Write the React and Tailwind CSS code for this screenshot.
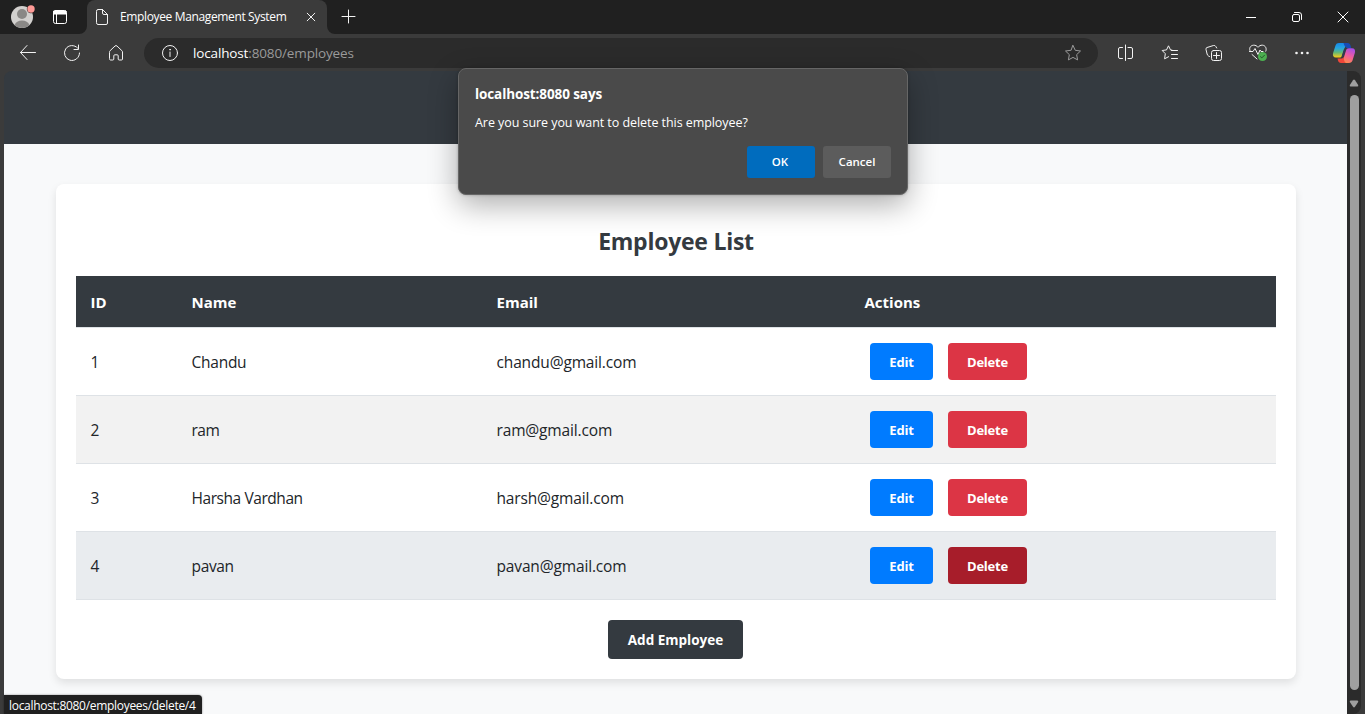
import React from 'react';

const employees = [
  { id: 1, name: 'Chandu', email: 'chandu@gmail.com', row: 'bg-white', del: 'bg-[#dc3545]', fit: 'tracking-[-0.250px]' },
  { id: 2, name: 'ram', email: 'ram@gmail.com', row: 'bg-[#f2f2f2]', del: 'bg-[#dc3545]', fit: 'tracking-[-0.500px]' },
  { id: 3, name: 'Harsha Vardhan', email: 'harsh@gmail.com', row: 'bg-white', del: 'bg-[#dc3545]', fit: 'tracking-[-0.430px]' },
  { id: 4, name: 'pavan', email: 'pavan@gmail.com', row: 'bg-[#e9ecef]', del: 'bg-[#a71d2a]', fit: 'tracking-[-0.350px]' },
];

function Icon({ size = 18, className = '', children, stroke = '#f2f2f2', width = 1 }) {
  return (
    <svg
      width={size}
      height={size}
      viewBox={`0 0 ${size} ${size}`}
      fill="none"
      stroke={stroke}
      strokeWidth={width}
      strokeLinecap="round"
      strokeLinejoin="round"
      className={`block shrink-0 ${className}`}
    >
      {children}
    </svg>
  );
}

function TabStrip() {
  return (
    <div className="flex h-[34px] shrink-0 bg-[#202020]">
      <svg width="24" height="24" viewBox="0 0 24 24" className="mt-[5px] ml-[11px] block shrink-0">
        <circle cx="11" cy="12" r="11" fill="#d2d0ce" />
        <circle cx="11" cy="9" r="5" fill="#8a8886" />
        <path d="M3.600 20.200C4.500 17.200 7.500 15.600 11 15.600s6.500 1.600 7.400 4.600A11 11 0 0 1 3.600 20.200Z" fill="#8a8886" />
        <circle cx="20" cy="4" r="4.200" fill="#202020" />
        <circle cx="20" cy="4" r="3.700" fill="#ff9a96" />
      </svg>
      <Icon size={16} className="mt-[9px] ml-[17px]" stroke="#ffffff">
        <rect x="1.500" y="1.500" width="13" height="13" rx="2" />
        <path d="M2 2h12v3H2z" fill="#fff" />
        <path d="M4.500 5v9" />
      </Icon>
      <div className="relative ml-[19px] flex h-full w-60 rounded-t-lg bg-[#3b3b3b]">
        <svg width="8" height="8" viewBox="0 0 8 8" className="absolute bottom-0 -left-2">
          <path d="M8 0v8H0a8 8 0 0 0 8-8Z" fill="#3b3b3b" />
        </svg>
        <svg width="8" height="8" viewBox="0 0 8 8" className="absolute -right-2 bottom-0">
          <path d="M0 0v8h8a8 8 0 0 1-8-8Z" fill="#3b3b3b" />
        </svg>
        <Icon size={16} className="mt-[9px] ml-[7px]">
          <path d="M2.500 2q0-1.500 1.500-1.500h4.500L13.500 5.500V14q0 1.500-1.500 1.500H4q-1.500 0-1.500-1.500ZM8.500 .5V4q0 1.500 1.500 1.500h3.500" />
        </Icon>
        <span className="mt-[9px] ml-[10px] w-[168px] text-[12px] leading-4 tracking-[-0.360px] whitespace-nowrap text-white">
          Employee Management System
        </span>
        <Icon size={10} className="mt-3 ml-[18px]">
          <path d="M1.200 1.200l7.600 7.600M8.800 1.200L1.200 8.800" />
        </Icon>
      </div>
      <Icon size={15} className="mt-[9px] ml-[14px]">
        <path d="M7.500 1v13M1 7.500h13" />
      </Icon>
      <div className="ml-auto flex items-center pr-[16px]">
        <Icon size={12} stroke="#fff">
          <path d="M1 6.500h10" strokeLinecap="butt" />
        </Icon>
        <Icon size={12} className="ml-[34px]" stroke="#fff">
          <rect x="1.500" y="3.500" width="7" height="7" rx="1.500" />
          <path d="M3.500 1.500H8q2.500 0 2.500 2.500v4.500" />
        </Icon>
        <Icon size={12} className="ml-[34px]" stroke="#fff">
          <path d="M1 1l10 10M11 1L1 11" />
        </Icon>
      </div>
    </div>
  );
}

function Copilot() {
  return (
    <svg width="24" height="22" viewBox="0 0 24 22" className="block shrink-0">
      <defs>
        <linearGradient id="cool" x1="0" y1="0" x2="0" y2="1">
          <stop offset="0" stopColor="#1688e8" />
          <stop offset=".35" stopColor="#25a5e0" />
          <stop offset=".65" stopColor="#62b878" />
          <stop offset="1" stopColor="#ffce14" />
        </linearGradient>
        <linearGradient id="warm" x1=".7" y1="0" x2=".3" y2="1">
          <stop offset="0" stopColor="#a64de8" />
          <stop offset=".5" stopColor="#ef5d9f" />
          <stop offset="1" stopColor="#ff8a45" />
        </linearGradient>
      </defs>
      <path d="M7 1h8.500L12 7l-2.500 7.500q-.4 1-1.500 1H4C1.500 15.500.4 13.800 1.100 11L3.500 3.500C4.100 1.800 5.200 1 7 1Z" fill="url(#cool)" />
      <path d="M11.500 1h4c2 0 2.500 1 3 2.500l.8 2.700h-3.500c-2.200 0-3.300-2-4.300-5.200Z" fill="#174bb5" />
      <path d="M17 21H9.500l2.500-6 2-6.500c.5-1.600 1.300-2.300 3-2.300h3c2.500 0 3.600 2 2.900 4.500L20.500 18.500c-.5 1.500-1.700 2.500-3.500 2.500Z" fill="url(#warm)" />
      <path d="M5.500 16.500H9c1.300 0 2-.5 2.500-1.500.4 3 1 5.500 2.500 6H9c-1.700 0-2.600-1-3-2.500Z" fill="#f0473a" />
      <path d="M13 7.500l-2.400 7" stroke="#303a58" strokeWidth="1.500" />
    </svg>
  );
}

const STAR = 'M9 1.500l2.250 4.800 5.250.7-3.850 3.650.95 5.250L9 13.400 4.400 15.900l.95-5.250L1.500 7l5.250-.7Z';

function Toolbar() {
  return (
    <div className="flex h-[37px] shrink-0 items-center bg-[#3b3b3b] pl-[19px]">
      <Icon>
        <path d="M16.500 8.500h-15M8 1.500L1.500 8.500 8 15.500" />
      </Icon>
      <Icon className="ml-[26px]">
        <path d="M14.600 4A7.500 7.500 0 1 0 16.500 9M15.500 1v4.500H11" />
      </Icon>
      <Icon className="ml-[26px]">
        <path d="M2.500 8q0-.8.600-1.300L8 2q1-.9 2 0l4.900 4.700q.6.500.6 1.300v7q0 1-1 1h-2.300q-1 0-1-1v-3.200q0-1-1-1H7.800q-1 0-1 1V15q0 1-1 1H3.500q-1 0-1-1Z" />
      </Icon>
      <div className="mt-px ml-[19px] flex h-[30px] w-[954px] items-center rounded-full bg-[#2b2b2b] pr-[16px] pl-[17px]">
        <Icon>
          <circle cx="9" cy="9" r="7.500" />
          <path d="M9 8v4.500" />
          <circle cx="9" cy="5.700" r=".4" />
        </Icon>
        <span className="ml-[14px] text-[13.500px] leading-5 tracking-[-0.140px] text-[#9a9a9a]">
          <span className="text-white">localhost</span>:8080/employees
        </span>
        <Icon className="ml-auto" stroke="#9a9a9a">
          <path d={STAR} />
        </Icon>
      </div>
      <Icon className="ml-[19px]">
        <path d="M5.500 3.500H3q-1.500 0-1.500 1.500v8q0 1.500 1.500 1.500h2.500M11 3.500h3q1.500 0 1.500 1.500v8q0 1.500-1.500 1.500h-3M8.500 1v15.500" />
      </Icon>
      <Icon className="ml-[26px]">
        <path d="M11 6.100L9.500 5.900 7.500 1.800 5.500 5.900l-4.300.6 3.100 3.200-.7 5.100 4-2.100M10.500 6.500h6M10.500 10.500h6M10.500 14.500h6" />
      </Icon>
      <Icon className="ml-[26px]">
        <rect x="6.500" y="6.500" width="10" height="10" rx="2" />
        <path d="M11.500 8.500v6M8.500 11.500h6M4.500 12.500L3.500 12q-1-.5-1.400-2L1 5.500Q.600 4 2 3.500L8.500 1.500q1.500-.5 2.300 1l.9 1.500" />
      </Icon>
      <Icon size={20} className="ml-[25px]">
        <path d="M2.500 8.500C.500 6 2 2.500 5.500 2.200 7.500 2 9 3 10 4.300 11 3 12.500 2 14.500 2.200c3 .3 4.500 3.300 3.300 6M1.500 8.500h3.500l2-3 3 6 2-4.500 1 1.500h2M4 11.500l5 4.500" />
        <circle cx="14.500" cy="13.500" r="4.500" fill="#4caf50" stroke="none" />
        <path d="M12.500 13.700l1.300 1.200 2.700-2.700" stroke="#24552a" />
      </Icon>
      <Icon className="ml-[25px]">
        <g fill="#f2f2f2" stroke="none">
          <circle cx="3.500" cy="9" r="1.300" />
          <circle cx="9" cy="9" r="1.300" />
          <circle cx="14.500" cy="9" r="1.300" />
        </g>
      </Icon>
      <div className="ml-[21px]">
        <Copilot />
      </div>
    </div>
  );
}

function Scrollbar() {
  return (
    <div className="flex w-[14px] shrink-0 flex-col items-center rounded-r-lg bg-[#2b2b2b]">
      <svg width="10" height="8" viewBox="0 0 10 8" className="mt-2 block shrink-0">
        <path d="M4 1.200Q5 0 6 1.200L9.200 6Q9.600 7.500 8.400 7.500H1.600Q.4 7.500.8 6Z" fill="#9f9f9f" />
      </svg>
      <div className="mt-2 h-[595px] w-[9px] shrink-0 rounded-full bg-[#9f9f9f]" />
      <svg width="10" height="8" viewBox="0 0 10 8" className="mt-[10px] block shrink-0">
        <path d="M4 6.800Q5 8 6 6.800L9.200 2Q9.600.5 8.400.5H1.600Q.4.500.8 2Z" fill="#9f9f9f" />
      </svg>
    </div>
  );
}

const COLS = 'grid grid-cols-[101px_306px_367px_1fr] items-center pl-[14.5px]';

function EmployeePage() {
  return (
    <div className="flex min-w-0 flex-1 flex-col">
      <div className="h-[73px] shrink-0 rounded-tl-lg bg-[#343a40]" />
      <div className="flex-1 bg-[#f8f9fa] pt-10 pl-[52px]">
        <main className="flex h-[495px] w-[1240px] flex-col items-center rounded-lg bg-white px-5 shadow-[0_4px_8px_rgba(0,0,0,0.1)]">
          <h2 className="mt-10 h-[52px] text-[23px] leading-[34px] font-bold tracking-[-0.250px] text-[#343a40]">
            Employee List
          </h2>
          <div className="w-full text-[15.500px] text-[#212529]">
            <div className={`${COLS} h-[52px] border-b border-[#dee2e6] bg-[#343a40] pt-0.5 text-[15px] font-bold text-white`}>
              <span>ID</span>
              <span>Name</span>
              <span className="-ml-px">Email</span>
              <span>Actions</span>
            </div>
            {employees.map((e) => (
              <div key={e.id} className={`${COLS} h-[68px] border-b border-[#dee2e6] ${e.row}`}>
                <span className="pt-0.5">{e.id}</span>
                <span className={`pt-0.5 ${e.fit}`}>{e.name}</span>
                <span className="-ml-px pt-0.5 tracking-[-0.150px]">{e.email}</span>
                <div className="ml-[5.5px] flex gap-[15px] text-[13px] font-bold tracking-[-0.200px] text-white">
                  <button className="h-[37px] w-[63px] rounded bg-[#007bff] pt-0.5">Edit</button>
                  <button className={`h-[37px] w-[79px] rounded pt-0.5 ${e.del}`}>Delete</button>
                </div>
              </div>
            ))}
          </div>
          <button className="mt-5 mr-px h-[39px] w-[135px] shrink-0 rounded bg-[#343a40] pt-0.5 text-[13.500px] font-bold text-white">
            Add Employee
          </button>
        </main>
      </div>
    </div>
  );
}

function ConfirmDialog() {
  return (
    <div className="absolute top-[68px] left-[458px] h-[127px] w-[450px] rounded-lg border border-[#666] bg-[#4a4a4a] px-4 pt-4 text-white shadow-[0_10px_30px_rgba(0,0,0,0.32),0_0_3px_rgba(0,0,0,0.25)]">
      <p className="text-[13.500px] leading-[18px] font-bold tracking-[-0.100px]">localhost:8080 says</p>
      <p className="mt-[11px] text-[12.500px] leading-[18px] tracking-[-0.060px]">Are you sure you want to delete this employee?</p>
      <div className="mt-[14px] flex justify-end gap-2 text-[11.500px] font-semibold">
        <button className="h-8 w-[68px] rounded-[3px] bg-[#006cbe] px-0 pr-0.5">OK</button>
        <button className="h-8 w-[68px] rounded-[3px] bg-[#5c5c5c]">Cancel</button>
      </div>
    </div>
  );
}

export default function App() {
  return (
    <div className="relative flex h-[714px] w-[1365px] flex-col overflow-hidden bg-[#3b3b3b] font-['Open_Sans','Noto_Sans',sans-serif]">
      <TabStrip />
      <Toolbar />
      <div className="flex min-h-0 flex-1 px-1">
        <EmployeePage />
        <Scrollbar />
      </div>
      <div className="absolute bottom-0 left-1 h-[19px] w-[198px] rounded-tr bg-[#202020] pl-[5px] text-[12px] leading-[21px] tracking-[-0.300px] whitespace-nowrap text-white shadow-[0_0_2px_rgba(0,0,0,0.5)]">
        localhost:8080/employees/delete/4
      </div>
      <ConfirmDialog />
    </div>
  );
}
